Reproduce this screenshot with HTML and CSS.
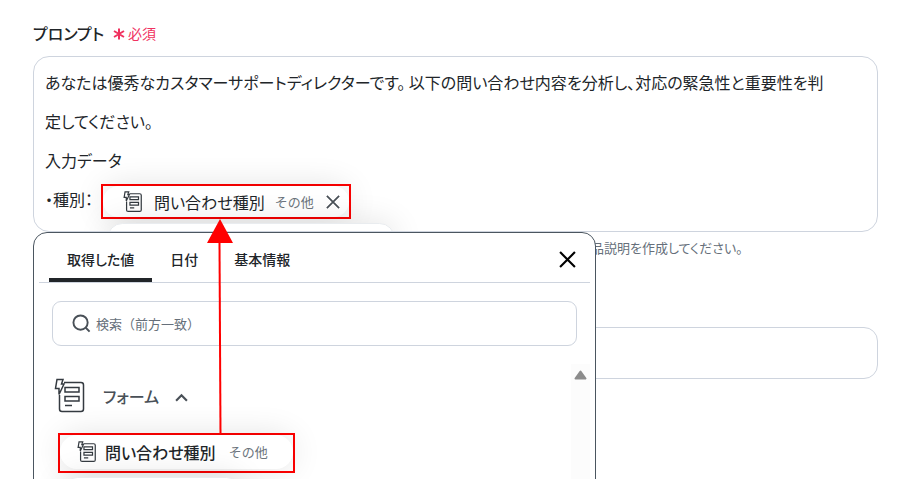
FILE: index.html
```html
<!DOCTYPE html>
<html lang="ja">
<head>
    <meta charset="UTF-8">
    <meta name="viewport" content="width=device-width, initial-scale=1.0">
    <title>プロンプト</title>
    <link rel="stylesheet" href="styles.css">
</head>
<body>
    <!-- Shared icons -->
    <svg class="sprite" aria-hidden="true">
        <symbol id="icon-form" viewBox="0 0 32 36">
            <path d="M10 4.500H27a2.500 2.500 0 0 1 2.500 2.500V31a2.500 2.500 0 0 1-2.500 2.500H8A2.500 2.500 0 0 1 5.500 31V17M11 9.500H25V14H11ZM11 18.500H25V23H11ZM11 27.500H18"/>
            <path class="bolt" d="M3 1.500H9L7.500 6H10L5 16.500V10.500H1.500Z"/>
        </symbol>
        <symbol id="icon-close" viewBox="0 0 16 16">
            <path d="M1 1L15 15M15 1L1 15"/>
        </symbol>
    </svg>

    <main class="page">
        <div class="field-head">
            <span class="field-label" id="prompt-label">プロンプト</span>
            <span class="required">
                <svg class="asterisk" viewBox="0 0 12 12" aria-hidden="true"><path d="M6 0.500V11.500M1 3L11 9M11 3L1 9"/></svg>
                必須
            </span>
        </div>

        <div class="prompt">
            <div class="editor" contenteditable="true" role="textbox" aria-multiline="true" aria-labelledby="prompt-label" spellcheck="false">
                <p>あなたは優秀なカスタマーサポートディレクターです。 以下の問い合わせ内容を分析し、対応の緊急性と重要性を判定してください。</p>
                <p>入力データ</p>
                <div class="editor-row" contenteditable="false">
                    <span>・種別：</span>
                    <span class="marked marked-chip">
                        <span class="chip">
                            <svg class="icon icon-small"><use href="#icon-form"/></svg>
                            <span class="chip-name">問い合わせ種別</span>
                            <span class="chip-type">その他</span>
                            <button type="button" class="chip-remove" aria-label="削除"><svg class="icon-x"><use href="#icon-close"/></svg></button>
                        </span>
                    </span>
                </div>
                <div class="editor-row" contenteditable="false">
                    <span class="chip chip-next"></span>
                </div>
            </div>

            <!-- Value picker -->
            <section class="picker" aria-label="値の選択">
                <div class="picker-head">
                    <div class="tabs" role="tablist">
                        <button type="button" class="tab active" role="tab" aria-selected="true">取得した値</button>
                        <button type="button" class="tab" role="tab">日付</button>
                        <button type="button" class="tab" role="tab">基本情報</button>
                    </div>
                    <button type="button" class="picker-close" aria-label="閉じる"><svg class="icon-x"><use href="#icon-close"/></svg></button>
                </div>

                <div class="search">
                    <svg class="icon-search" viewBox="0 0 20 20" aria-hidden="true"><circle cx="9" cy="9" r="7.500"/><path d="M14.500 14.500L18.500 18.500"/></svg>
                    <input type="search" placeholder="検索（前方一致）" aria-label="検索（前方一致）">
                </div>

                <div class="picker-body">
                    <div class="values">
                        <button type="button" class="group" aria-expanded="true">
                            <svg class="icon icon-large"><use href="#icon-form"/></svg>
                            <span>フォーム</span>
                            <svg class="icon-chevron" viewBox="0 0 12 8" aria-hidden="true"><path d="M1 7L6 2L11 7"/></svg>
                        </button>
                        <div class="marked marked-value">
                            <button type="button" class="chip value">
                                <svg class="icon icon-small"><use href="#icon-form"/></svg>
                                <span class="chip-name">問い合わせ種別</span>
                                <span class="chip-type">その他</span>
                            </button>
                        </div>
                        <div class="chip value-next"></div>
                    </div>
                    <div class="scrollbar">
                        <svg viewBox="0 0 13 10" aria-hidden="true"><path d="M6.500 1.500L11.500 8.500H1.500Z"/></svg>
                    </div>
                </div>

                <svg class="arrow" viewBox="0 0 26 215" aria-hidden="true">
                    <path d="M13 0L26 24H0Z"/>
                    <path d="M11.500 24H13.500L14.500 215H12.500Z"/>
                </svg>
            </section>
        </div>

        <p class="hint">品説明を作成してください。</p>
        <input type="text" class="text-input" aria-label="入力">
    </main>
</body>
</html>
```
FILE: styles.css
```css
* {
    box-sizing: border-box;
}
body {
    height: 100vh;
    margin: 0;
    overflow: hidden;
    background-color: #fff;
    color: #212529;
    font-family: "Noto Sans CJK JP", "Noto Sans", sans-serif;
    font-size: 16px;
    font-feature-settings: "palt";
}
button, input {
    font: inherit;
    font-feature-settings: inherit;
    color: inherit;
}
button {
    padding: 0;
    border: none;
    background: none;
    cursor: pointer;
}
p {
    margin: 0;
}
svg {
    flex: none;
    fill: none;
    stroke: currentColor;
}
.sprite {
    position: absolute;
    width: 0;
    height: 0;
}
.page {
    height: 100vh;
    padding: 20px 33px 0;
    overflow: hidden;
}

/* Label */
.field-head {
    display: flex;
    align-items: center;
    gap: 9px;
    height: 26px;
    margin-bottom: 10px;
}
.field-label {
    font-weight: 500;
}
.required {
    display: flex;
    align-items: center;
    gap: 3px;
    color: #f0325f;
    font-size: 14px;
}
.asterisk {
    width: 12px;
    height: 12px;
    margin-top: 2px;
    stroke-width: 2;
}

/* Editor */
.prompt {
    position: relative;
}
.editor {
    height: 176px;
    padding: 6px 40px 0 11px;
    overflow: hidden;
    border: 1px solid #ced4de;
    border-radius: 16px;
    line-height: 39px;
    outline: none;
}
.editor-row {
    display: flex;
    align-items: center;
    gap: 8px;
    height: 39px;
}
.marked {
    border: 2px solid #f00;
}
.marked-chip {
    align-self: flex-end;
    height: 35px;
}
.chip {
    display: flex;
    align-items: center;
    height: 31px;
    border-radius: 16px;
    background-color: #fff;
    box-shadow: 0 0 32px rgba(0, 0, 0, 0.12);
    line-height: 24px;
}
.marked-chip .chip {
    padding: 0 9px 0 20px;
}
.chip-name {
    margin-left: 11px;
}
.chip-type {
    margin-left: 10px;
    color: #6c757d;
    font-size: 13px;
    font-feature-settings: normal;
}
.chip-remove {
    display: flex;
    margin-left: 12px;
    color: #495057;
}
.icon-x {
    width: 14px;
    height: 14px;
    stroke-width: 2;
}
.chip-next {
    width: 288px;
    margin-left: 62px;
    border: 1px solid #e9ecef;
}
.icon {
    stroke-width: 2;
    color: #343a40;
}
.icon-small {
    width: 20px;
    height: 22px;
}
.icon-large {
    width: 32px;
    height: 36px;
    stroke-width: 1.5;
}
.bolt {
    fill: #fff;
}

/* Picker */
.picker {
    position: absolute;
    top: 100%;
    left: 0;
    z-index: 1;
    width: 100%;
    max-width: 563px;
    height: 320px;
    border: 1px solid #4b5660;
    border-radius: 14px;
    background-color: #fff;
}
.picker-head {
    display: flex;
    align-items: center;
    justify-content: space-between;
    height: 50px;
    margin: 0 5px;
    padding: 0 14px 0 10px;
    border-bottom: 1px solid #ced4de;
}
.tabs {
    display: flex;
    height: 49px;
}
.tab {
    padding: 6px 18px 0;
    border-bottom: 4px solid transparent;
    font-size: 14px;
    font-weight: 500;
}
.tab.active {
    border-bottom-color: #212529;
    border-radius: 3px 3px 0 0;
}
.picker-close {
    display: flex;
    margin-top: 4px;
    color: #000;
}
.picker-close .icon-x {
    width: 17px;
    height: 17px;
}
.search {
    display: flex;
    align-items: center;
    gap: 5px;
    height: 45px;
    margin: 18px 18px 0;
    padding: 0 19px;
    border: 1px solid #ced4de;
    border-radius: 9px;
}
.icon-search {
    width: 19px;
    height: 19px;
    color: #495057;
    stroke-width: 2;
}
.search input {
    flex: 1;
    min-width: 0;
    padding: 0;
    border: none;
    outline: none;
    background: none;
    font-size: 13px;
    font-feature-settings: normal;
    text-spacing-trim: space-all;
}
.search input::placeholder {
    color: #666f7a;
}
.picker-body {
    display: flex;
    justify-content: space-between;
    height: 180px;
    margin-top: 18px;
    padding: 0 5px 0 20px;
    overflow: hidden;
}
.values {
    flex: 1;
}
.group {
    display: flex;
    align-items: center;
    height: 64px;
    color: #495057;
    font-weight: 500;
}
.group span {
    margin: 0 16px 0 17px;
}
.icon-chevron {
    width: 13px;
    height: 9px;
    margin-top: 2px;
    stroke-width: 2;
}
.marked-value {
    width: 237px;
    height: 40px;
    margin: 5px 0 4px 4px;
}
.value {
    width: 100%;
    height: 34px;
    padding-left: 17px;
    border-radius: 17px;
}
.value .chip-name {
    margin-left: 8px;
    font-weight: 500;
}
.value .chip-type {
    margin-left: 13px;
}
.value-next {
    width: 180px;
    margin-left: 8px;
    border: 1px solid #e9ecef;
}
.scrollbar {
    width: 19px;
    background-color: #fcfcfc;
}
.scrollbar svg {
    display: block;
    width: 13px;
    height: 10px;
    margin: 6px auto;
    fill: #8c8c8c;
    stroke: #8c8c8c;
    stroke-linejoin: round;
    stroke-width: 2;
}

/* Arrow from the picked value to its place in the prompt */
.arrow {
    position: absolute;
    top: -14px;
    left: 173px;
    width: 26px;
    height: 215px;
    fill: #f00;
    stroke: none;
}

/* Below the editor */
.hint {
    padding: 6px 0 0 558px;
    color: #666f7a;
    font-size: 13px;
    line-height: 20px;
}
.text-input {
    display: block;
    width: 100%;
    height: 52px;
    margin-top: 69px;
    padding: 0 12px;
    border: 1px solid #ced4de;
    border-radius: 14px;
    background-color: #fff;
}
```
